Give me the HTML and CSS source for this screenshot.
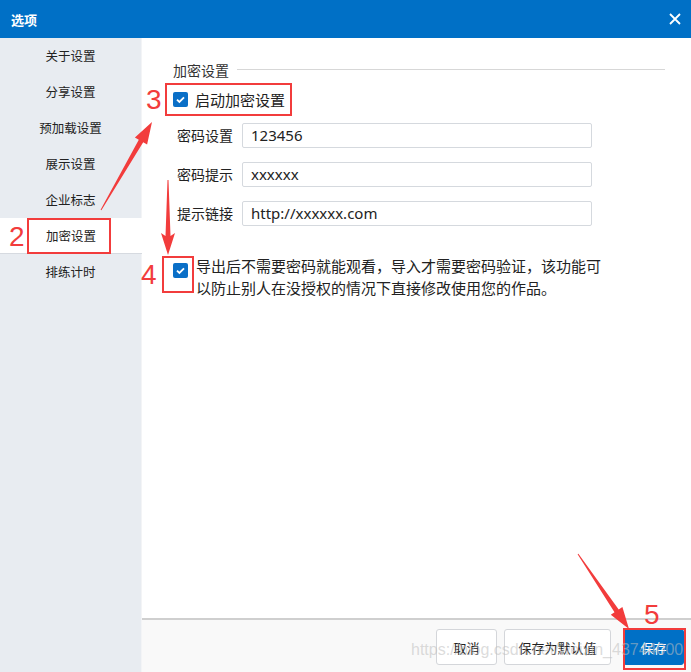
FILE: index.html
```html
<!DOCTYPE html>
<html lang="zh">
<head>
<meta charset="utf-8">
<title>选项</title>
<link rel="stylesheet" href="styles.css">
</head>
<body>
<div class="window">
  <div class="titlebar">
    <span class="title">选项</span>
    <span class="close">
      <svg width="12" height="12" viewBox="0 0 12 12"><path d="M1 1L11 11M11 1L1 11" stroke="#fff" stroke-width="1.8" fill="none"/></svg>
    </span>
  </div>
  <div class="body">
    <div class="sidebar">
      <div class="nav-item">关于设置</div>
      <div class="nav-item">分享设置</div>
      <div class="nav-item">预加载设置</div>
      <div class="nav-item">展示设置</div>
      <div class="nav-item">企业标志</div>
      <div class="nav-item active">加密设置</div>
      <div class="nav-item">排练计时</div>
    </div>
    <div class="main">
      <div class="content">
        <div class="section-title"><span>加密设置</span><i class="rule"></i></div>
        <label class="check-row">
          <span class="checkbox"><svg width="15" height="15" viewBox="0 0 15 15"><path d="M4 7.6L6.4 10L11 5.3" stroke="#fff" stroke-width="1.8" fill="none"/></svg></span>
          <span class="check-text">启动加密设置</span>
        </label>
        <div class="form">
          <div class="form-row"><span class="label">密码设置</span><div class="input">123456</div></div>
          <div class="form-row"><span class="label">密码提示</span><div class="input">xxxxxx</div></div>
          <div class="form-row"><span class="label">提示链接</span><div class="input">http://xxxxxx.com</div></div>
        </div>
        <div class="desc-row">
          <span class="checkbox"><svg width="15" height="15" viewBox="0 0 15 15"><path d="M4 7.6L6.4 10L11 5.3" stroke="#fff" stroke-width="1.8" fill="none"/></svg></span>
          <p class="desc">导出后不需要密码就能观看，导入才需要密码验证，该功能可以防止别人在没授权的情况下直接修改使用您的作品。</p>
        </div>
      </div>
      <div class="footer">
        <button class="btn">取消</button>
        <button class="btn wide">保存为默认值</button>
        <button class="btn primary">保存</button>
      </div>
    </div>
  </div>

  <div class="mark box2"></div>
  <div class="mark box3"></div>
  <div class="mark box4"></div>
  <div class="mark box5"></div>
  <span class="num n2">2</span>
  <span class="num n3">3</span>
  <span class="num n4">4</span>
  <span class="num n5">5</span>
  <svg class="arrows" width="691" height="672" viewBox="0 0 691 672">
    <polygon fill="#f23c3c" points="100.6,209.7 138.8,139.7 134.9,137.5 152,122 147.1,144.5 143.2,142.3 101.4,210.3"/>
    <polygon fill="#f23c3c" points="167.5,180 165.5,236 161,233 168,255 175,233 170.5,236 168.5,180"/>
    <polygon fill="#f23c3c" points="577.6,554.3 614.5,612.2 610.8,614.7 629,629 622.4,606.9 618.7,609.4 578.4,553.7"/>
  </svg>
  <div class="watermark">https://blog.csdn.net/weixin_43744000</div>
</div>
</body>
</html>
```
FILE: styles.css
```css
* { box-sizing: border-box; }
html, body { margin: 0; padding: 0; }
body {
  font-family: "Noto Sans CJK SC", "Noto Sans", sans-serif;
  color: #222;
  background: #fff;
}
.window {
  position: relative;
  width: 691px;
  height: 672px;
  display: flex;
  flex-direction: column;
  overflow: hidden;
}
.titlebar {
  height: 38px;
  background: #0070c6;
  display: flex;
  align-items: center;
  justify-content: space-between;
  padding: 0 10px 0 11px;
  color: #fff;
}
.title { font-size: 13px; font-weight: bold; }
.close { display: flex; align-items: center; }
.body { flex: 1; display: flex; min-height: 0; }
.sidebar {
  width: 142px;
  background: #e8ecf1;
  border-right: 1px solid #f3f4f6;
  display: flex;
  flex-direction: column;
}
.nav-item {
  height: 36px;
  display: flex;
  align-items: center;
  justify-content: center;
  font-size: 12.5px;
  color: #222;
  padding-bottom: 1px;
}
.nav-item.active {
  background: #fff;
  border-bottom: 1px solid #d6dae0;
  margin-right: -1px;
}
.main { flex: 1; display: flex; flex-direction: column; }
.content { flex: 1; padding: 22px 26px 0 31px; }
.section-title {
  display: flex;
  align-items: center;
  gap: 8px;
  font-size: 14px;
  color: #333;
  height: 20px;
}
.rule { flex: 1; height: 1px; background: #d7d7d7; margin-top: -1px; }
.check-row {
  display: flex;
  align-items: center;
  gap: 7px;
  margin-top: 9px;
  height: 20px;
}
.checkbox {
  width: 15px;
  height: 15px;
  background: #0a6fc7;
  border-radius: 2px;
  display: inline-flex;
  flex: none;
}
.check-text { font-size: 15px; color: #222; }
.form { margin-top: 14px; padding-left: 4px; display: flex; flex-direction: column; gap: 15px; }
.form-row { display: flex; align-items: center; gap: 9px; height: 24px; }
.label { font-size: 14px; width: 56px; color: #222; }
.input {
  width: 350px;
  height: 25px;
  border: 1px solid #d5d9de;
  border-radius: 2px;
  padding-left: 8px;
  font-size: 15px;
  line-height: 23px;
  color: #222;
  font-family: "Noto Sans", "Noto Sans CJK SC", sans-serif;
}
.desc-row { display: flex; align-items: flex-start; gap: 8px; margin-top: 30px; }
.desc-row .checkbox { margin-top: 8px; }
.desc {
  margin: 0;
  width: 415px;
  font-size: 15px;
  line-height: 22px;
  color: #222;
}
.footer {
  height: 54px;
  border-top: 2px solid #cfcfcf;
  background: #f9f9f9;
  display: flex;
  justify-content: flex-end;
  align-items: center;
  gap: 7px;
  padding: 2px 7px 0 0;
}
.btn {
  height: 36px;
  width: 61px;
  border: 1px solid #d4d6da;
  border-radius: 3px;
  background: #fff;
  font-family: "Noto Sans CJK SC", sans-serif;
  font-size: 13px;
  color: #222;
  padding: 0;
}
.btn.wide { width: 107px; margin-right: 5px; }
.btn.primary { background: #0070c6; border-color: #0070c6; color: #fff; }
.mark { position: absolute; border: 2px solid #f23c3c; }
.box2 { left: 27px; top: 218px; width: 84px; height: 36px; }
.box3 { left: 165px; top: 83px; width: 127px; height: 33px; }
.box4 { left: 162px; top: 256px; width: 32px; height: 37px; }
.box5 { left: 623px; top: 628px; width: 63px; height: 42px; }
.num {
  position: absolute;
  color: #f23c3c;
  font-family: "Liberation Sans", sans-serif;
  font-size: 28px;
  line-height: 1;
}
.n2 { left: 9px; top: 223px; }
.n3 { left: 146px; top: 86px; }
.n4 { left: 141px; top: 261px; }
.n5 { left: 644px; top: 601px; }
.arrows { position: absolute; left: 0; top: 0; pointer-events: none; }
.watermark {
  position: absolute;
  left: 411px;
  top: 641px;
  font-family: "Liberation Sans", sans-serif;
  font-size: 16px;
  color: rgba(190, 190, 190, 0.55);
  white-space: nowrap;
  pointer-events: none;
}
```
